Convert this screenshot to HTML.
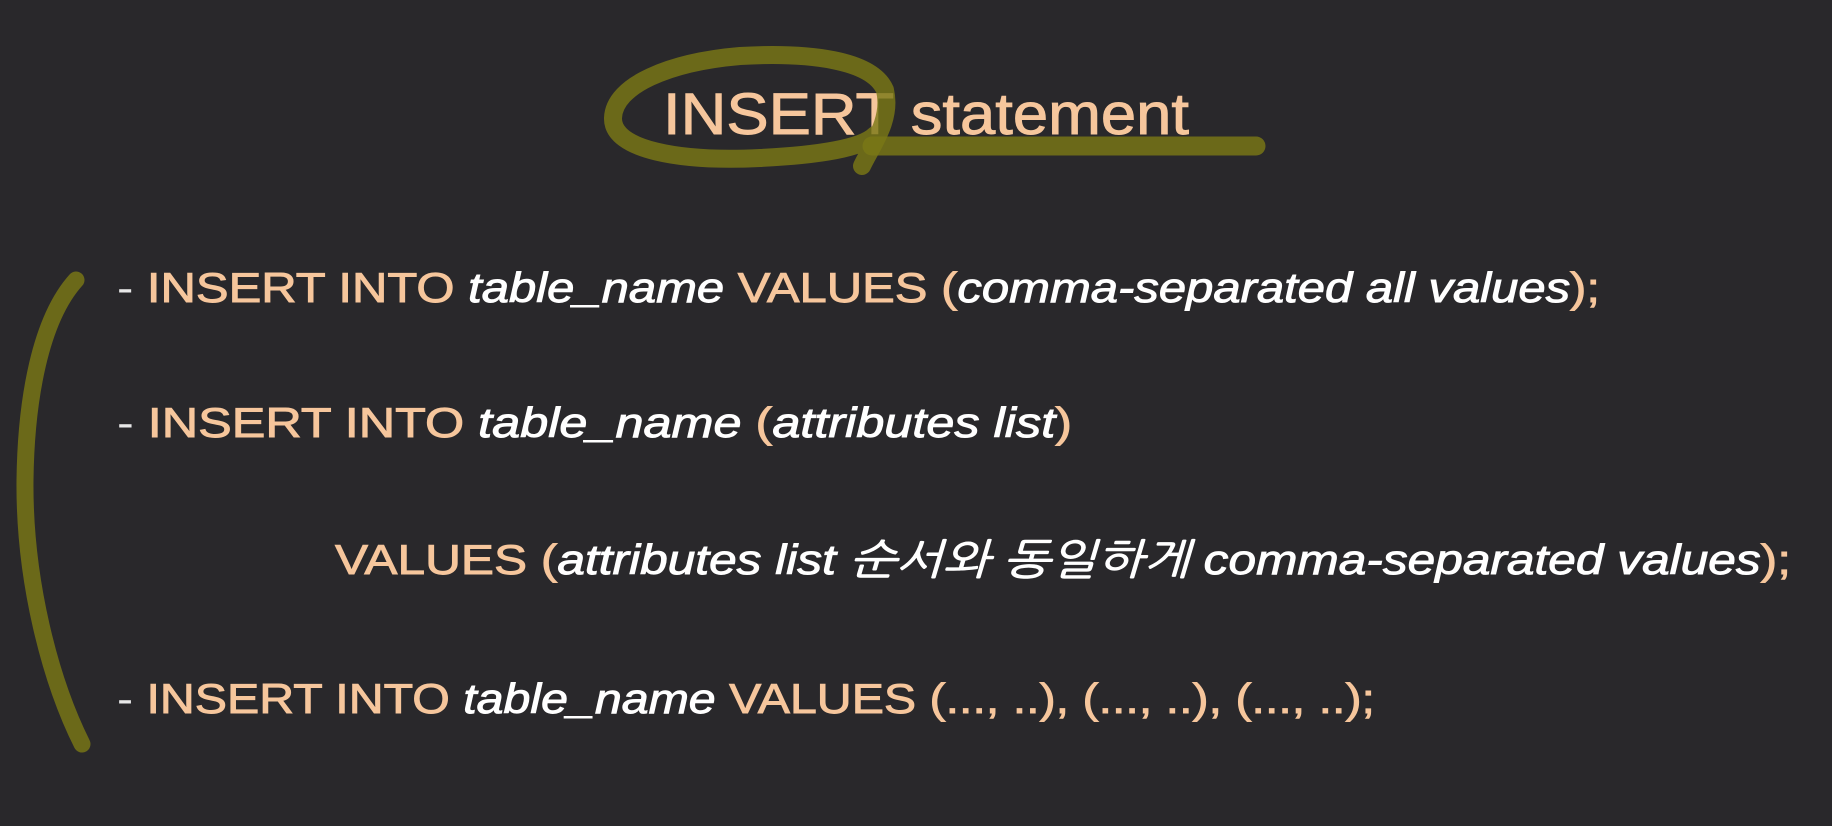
<!DOCTYPE html>
<html><head><meta charset="utf-8"><style>
html,body{margin:0;padding:0;background:#29282b;}
svg{display:block}
text{font-family:"Liberation Sans","NanumGothic","Noto Sans CJK KR",sans-serif;}
.o{fill:#f6c69c;stroke:#f6c69c;stroke-width:0.9;}
.w{fill:#ffffff;font-style:italic;stroke:#ffffff;stroke-width:0.9;}
.d{fill:#e8e8e8;}
</style></head><body>
<svg width="1832" height="826" viewBox="0 0 1832 826" xmlns="http://www.w3.org/2000/svg">
<rect width="1832" height="826" fill="#29282b"/>
<!-- title -->
<text x="663" y="134" font-size="58" textLength="526" lengthAdjust="spacingAndGlyphs" class="o">INSERT statement</text>
<g fill="none" stroke="#7a7716" stroke-opacity="0.82" stroke-linecap="round" stroke-linejoin="round">
<path d="M872 146 L1256 146" stroke-width="19"/>
<path d="M862 166 C872 145 892 120 885 90 C872 60 810 52 740 56 C670 62 614 85 613 118 C612 150 680 162 760 158 C820 155 862 148 875 135" stroke-width="18"/>
<path d="M76 280 C40 320 26 400 25 480 C24 580 50 680 82 744" stroke-width="17"/>
</g>
<!-- line 1 -->
<text y="302" font-size="42" textLength="1483" x="117" lengthAdjust="spacingAndGlyphs"><tspan class="d">- </tspan><tspan class="o">INSERT INTO </tspan><tspan class="w">table_name </tspan><tspan class="o">VALUES (</tspan><tspan class="w">comma-separated all values</tspan><tspan class="o">);</tspan></text>
<!-- line 2 -->
<text y="437" font-size="42" textLength="955" x="117" lengthAdjust="spacingAndGlyphs"><tspan class="d">- </tspan><tspan class="o">INSERT INTO </tspan><tspan class="w">table_name </tspan><tspan class="o">(</tspan><tspan class="w">attributes list</tspan><tspan class="o">)</tspan></text>
<!-- line 3 -->
<text y="574" font-size="42" textLength="1456" x="335" lengthAdjust="spacingAndGlyphs"><tspan class="o">VALUES (</tspan><tspan class="w">attributes list 순서와 동일하게 comma-separated values</tspan><tspan class="o">);</tspan></text>
<!-- line 4 -->
<text y="713" font-size="42" textLength="1258" x="117" lengthAdjust="spacingAndGlyphs"><tspan class="d">- </tspan><tspan class="o">INSERT INTO </tspan><tspan class="w">table_name </tspan><tspan class="o">VALUES (..., ..), (..., ..), (..., ..);</tspan></text>
</svg>
</body></html>
